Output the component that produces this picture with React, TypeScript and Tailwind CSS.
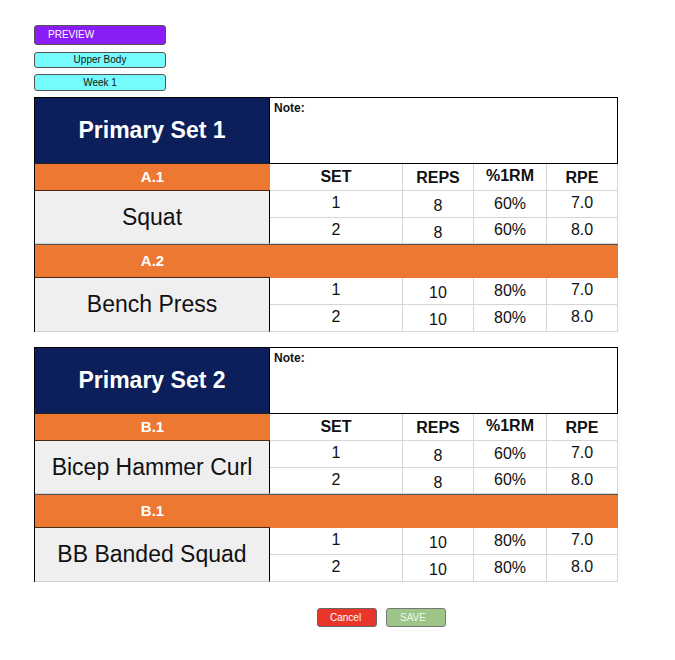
import React from "react";

type Row = { set: string; reps: string; pct: string; rpe: string };
type Ex = { label: string; name: string; rows: Row[]; blockH: string; rowH: string[] };
type Block = { title: string; exercises: Ex[] };

const blocks: Block[] = [
  {
    title: "Primary Set 1",
    exercises: [
      {
        label: "A.1",
        name: "Squat",
        blockH: "h-[53px]",
        rowH: ["h-[27px]", "h-[26px]"],
        rows: [
          { set: "1", reps: "8", pct: "60%", rpe: "7.0" },
          { set: "2", reps: "8", pct: "60%", rpe: "8.0" },
        ],
      },
      {
        label: "A.2",
        name: "Bench Press",
        blockH: "h-[54px]",
        rowH: ["h-[27px]", "h-[27px]"],
        rows: [
          { set: "1", reps: "10", pct: "80%", rpe: "7.0" },
          { set: "2", reps: "10", pct: "80%", rpe: "8.0" },
        ],
      },
    ],
  },
  {
    title: "Primary Set 2",
    exercises: [
      {
        label: "B.1",
        name: "Bicep Hammer Curl",
        blockH: "h-[53px]",
        rowH: ["h-[27px]", "h-[26px]"],
        rows: [
          { set: "1", reps: "8", pct: "60%", rpe: "7.0" },
          { set: "2", reps: "8", pct: "60%", rpe: "8.0" },
        ],
      },
      {
        label: "B.1",
        name: "BB Banded Squad",
        blockH: "h-[54px]",
        rowH: ["h-[27px]", "h-[27px]"],
        rows: [
          { set: "1", reps: "10", pct: "80%", rpe: "7.0" },
          { set: "2", reps: "10", pct: "80%", rpe: "8.0" },
        ],
      },
    ],
  },
];

function DataRow({ r, h }: { r: Row; h: string }) {
  return (
    <div className={`flex ${h} shrink-0 border-b border-[#d6d6d6] text-[16px] leading-none text-[#111]`}>
      <div className="w-[133px] border-r border-[#d6d6d6] flex items-center justify-center pb-[2px]">{r.set}</div>
      <div className="w-[71px] border-r border-[#d6d6d6] flex items-center justify-center pt-[4px]">{r.reps}</div>
      <div className="w-[73px] border-r border-[#d6d6d6] flex items-center justify-center pb-[1px]">{r.pct}</div>
      <div className="w-[71px] border-r border-[#d6d6d6] flex items-center justify-center pb-[2px]">{r.rpe}</div>
    </div>
  );
}

function Exercise({ ex, first }: { ex: Ex; first: boolean }) {
  return (
    <>
      <div className={`flex shrink-0 ${first ? "h-[27px]" : "h-[34px] border-t border-[#555]"}`}>
        <div className="w-[235px] bg-[#ed7831] border-b border-[#4a2a12] flex items-center justify-center text-white font-bold text-[15px] leading-none pb-[1px]">
          {ex.label}
        </div>
        {first ? (
          <div className="flex w-[348px] border-b border-[#d6d6d6] font-bold text-[16px] leading-none text-[#111]">
            <div className="w-[133px] border-r border-[#d6d6d6] flex items-center justify-center">SET</div>
            <div className="w-[71px] border-r border-[#d6d6d6] flex items-center justify-center pt-[2px]">REPS</div>
            <div className="w-[73px] border-r border-[#d6d6d6] flex items-center justify-center pb-[2px]">%1RM</div>
            <div className="w-[71px] border-r border-[#d6d6d6] flex items-center justify-center pt-[2px]">RPE</div>
          </div>
        ) : (
          <div className="w-[348px] bg-[#ed7831]" />
        )}
      </div>
      <div className={`flex shrink-0 ${ex.blockH}`}>
        <div className="w-[235px] bg-[#efefef] border-r border-black border-b border-b-[#cfcfcf] flex items-center justify-center text-[23px] leading-none text-[#111]">
          {ex.name}
        </div>
        <div className="w-[348px] flex flex-col">
          {ex.rows.map((r, i) => (
            <DataRow key={i} r={r} h={ex.rowH[i]} />
          ))}
        </div>
      </div>
    </>
  );
}

function Table({ b }: { b: Block }) {
  return (
    <div className="w-[584px] border-l border-black flex flex-col">
      <div className="flex h-[67px] shrink-0 border-t border-black">
        <div className="w-[235px] bg-[#0c1f5b] border-r border-black border-b border-b-[#222] flex items-center justify-center text-white font-bold text-[23px] leading-none">
          {b.title}
        </div>
        <div className="w-[349px] -ml-[1px] border border-t-0 border-black bg-white pl-[4px] pt-[4px] text-[12px] font-bold text-[#111] leading-none">
          Note:
        </div>
      </div>
      {b.exercises.map((ex, i) => (
        <Exercise key={i} ex={ex} first={i === 0} />
      ))}
    </div>
  );
}

export default function App() {
  return (
    <div className="min-h-[660px] w-[675px] bg-white font-['Liberation_Sans',Arial,Helvetica,sans-serif] pl-[34px] pt-[25px]">
      <div className="flex flex-col gap-[6px]">
        <button className="w-[132px] h-[20px] bg-[#8a1cf6] border border-[#555] rounded-[3px] text-white text-[10px] text-left pl-[13px] leading-none">
          PREVIEW
        </button>
        <button className="mt-[1px] w-[132px] h-[16px] bg-[#76fbfd] border border-[#555] rounded-[3px] text-[#111] text-[10px] leading-none">
          Upper Body
        </button>
        <button className="w-[132px] h-[17px] bg-[#76fbfd] border border-[#555] rounded-[3px] text-[#111] text-[10px] leading-none">
          Week 1
        </button>
      </div>
      <div className="mt-[6px] flex flex-col gap-[15px]">
        {blocks.map((b, i) => (
          <Table key={i} b={b} />
        ))}
      </div>
      <div className="mt-[26px] flex gap-[9px] pl-[283px]">
        <button className="w-[60px] h-[19px] bg-[#e8362b] border border-[#666] rounded-[3px] text-white text-[10px] text-left pl-[12px] leading-none">
          Cancel
        </button>
        <button className="w-[60px] h-[19px] bg-[#9cc587] border border-[#777] rounded-[3px] text-[#f2f8ee] text-[10px] text-left pl-[13px] leading-none">
          SAVE
        </button>
      </div>
    </div>
  );
}
